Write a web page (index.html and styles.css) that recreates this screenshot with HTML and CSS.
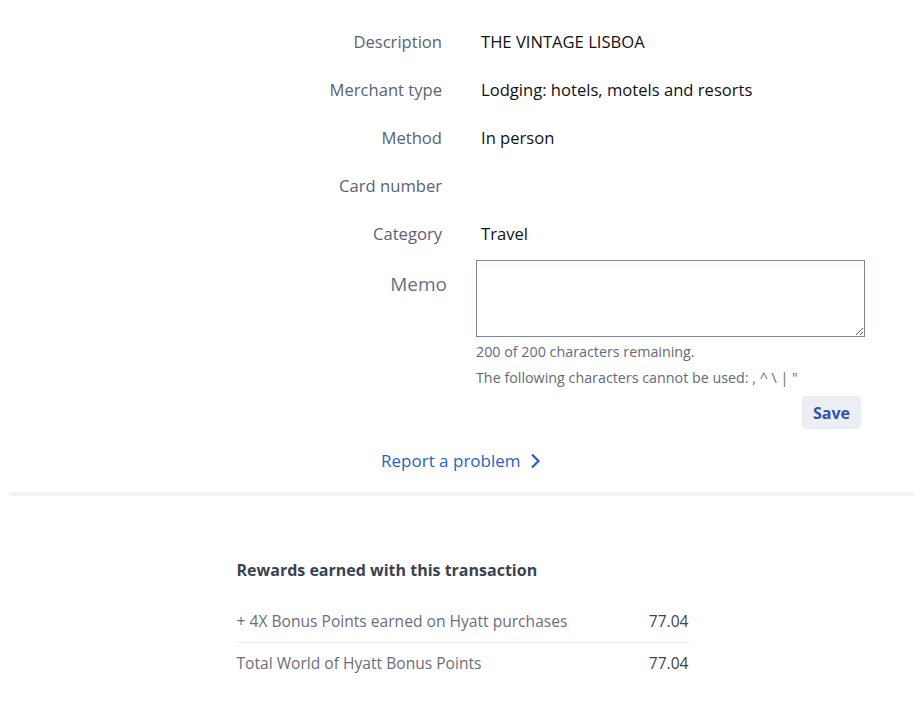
FILE: index.html
```html
<!DOCTYPE html>
<html lang="en">
<head>
    <meta charset="UTF-8">
    <meta name="viewport" content="width=device-width, initial-scale=1.0">
    <title>Transaction details</title>
    <link rel="stylesheet" href="styles.css">
</head>
<body>

<div class="details">
    <div class="detail-row">
        <div class="detail-label">Description</div>
        <div class="detail-value">THE VINTAGE LISBOA</div>
    </div>
    <div class="detail-row">
        <div class="detail-label">Merchant type</div>
        <div class="detail-value">Lodging: hotels, motels and resorts</div>
    </div>
    <div class="detail-row">
        <div class="detail-label">Method</div>
        <div class="detail-value">In person</div>
    </div>
    <div class="detail-row">
        <div class="detail-label">Card number</div>
        <div class="detail-value"></div>
    </div>
    <div class="detail-row">
        <div class="detail-label">Category</div>
        <div class="detail-value">Travel</div>
    </div>

    <!-- Memo -->
    <div class="memo-row">
        <label class="memo-label" for="memo">Memo</label>
        <div class="memo-field">
            <textarea id="memo" maxlength="200"></textarea>
            <p class="memo-hint">200 of 200 characters remaining.</p>
            <p class="memo-hint">The following characters cannot be used: , ^ \ | "</p>
            <div class="memo-actions">
                <button class="save-btn">Save</button>
            </div>
        </div>
    </div>

    <div class="report">
        <a href="#" class="report-link">Report a problem
            <svg width="12" height="18" viewBox="0 0 12 18"><path d="M3 2.5l6.5 6.5-6.5 6.5" fill="none" stroke="#2b5fc2" stroke-width="2.2"/></svg>
        </a>
    </div>
</div>

<div class="divider"></div>

<!-- Rewards -->
<div class="rewards">
    <h3>Rewards earned with this transaction</h3>
    <div class="reward-row">
        <span>+ 4X Bonus Points earned on Hyatt purchases</span>
        <span class="reward-amount">77.04</span>
    </div>
    <div class="reward-row">
        <span>Total World of Hyatt Bonus Points</span>
        <span class="reward-amount">77.04</span>
    </div>
</div>

</body>
</html>
```

FILE: styles.css
```css
body {
    font-family: "Open Sans", Arial, sans-serif;
    background-color: #fff;
    margin: 0;
    padding: 18px 0 0;
}
.detail-row {
    display: grid;
    grid-template-columns: 442px 1fr;
    column-gap: 39px;
    height: 48px;
    align-items: center;
    font-size: 16.6px;
    line-height: 22px;
}
.detail-label {
    text-align: right;
    color: #5a6372;
}
.detail-value {
    color: #111;
}
.memo-row {
    display: grid;
    grid-template-columns: 447px 389px;
    column-gap: 29px;
    padding-top: 2px;
}
.memo-label {
    text-align: right;
    font-size: 19px;
    color: #6a7282;
    padding-top: 11px;
    line-height: 26px;
}
.memo-field textarea {
    display: block;
    box-sizing: border-box;
    width: 389px;
    height: 77px;
    border: 1px solid #7c869a;
    border-radius: 0;
    margin: 0;
    font-family: inherit;
}
.memo-hint {
    margin: 0;
    font-size: 14.3px;
    line-height: 26px;
    color: #646b78;
}
.memo-hint:first-of-type {
    margin-top: 2px;
}
.memo-actions {
    display: flex;
    justify-content: flex-end;
    padding: 5px 4px 0 0;
}
.save-btn {
    background-color: #eceef4;
    color: #2c54b0;
    font-family: inherit;
    font-size: 16px;
    font-weight: 700;
    padding: 0 11px;
    height: 33px;
    border: none;
    border-radius: 4px;
    cursor: pointer;
}
.report {
    text-align: center;
    padding-top: 21px;
}
.report-link {
    color: #2b5fc2;
    text-decoration: none;
    font-size: 17px;
    line-height: 22px;
}
.report-link svg {
    vertical-align: -3px;
    margin-left: 4px;
}
.divider {
    height: 4px;
    background-color: #f4f4f5;
    margin: 20px 8px 0 9px;
}
.rewards {
    width: 452px;
    margin: 0 auto;
    padding: 63px 0 0 3px;
}
.rewards h3 {
    margin: 0 0 20px;
    font-size: 16px;
    line-height: 22px;
    font-weight: 700;
    color: #3b4250;
}
.reward-row {
    display: flex;
    justify-content: space-between;
    font-size: 15.6px;
    line-height: 21px;
    color: #6b6e78;
    padding: 10px 0;
}
.reward-row + .reward-row {
    border-top: 1px solid #ebebf2;
}
.reward-amount {
    color: #444;
}
```
